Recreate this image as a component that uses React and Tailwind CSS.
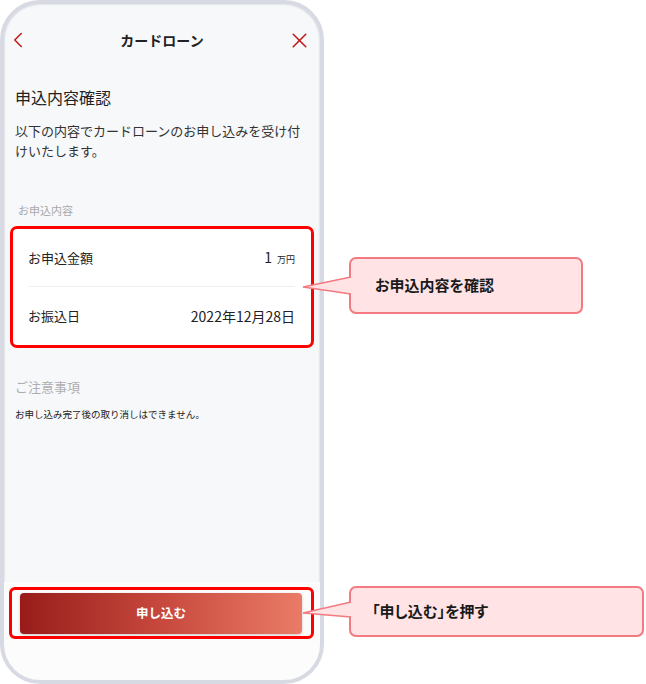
import { ChevronLeft, X } from "lucide-react";

const jp = "font-['Noto_Sans_CJK_JP','Noto_Sans',sans-serif]";

function Row({ label, children, divider }) {
  return (
    <div className={`flex h-[58px] items-center justify-between ${divider ? "border-b border-[#f0f0f2]" : ""}`}>
      <span className="text-[13px] text-[#222]">{label}</span>
      {children}
    </div>
  );
}

function Callout({ className, tail, children }) {
  return (
    <>
      <div
        className={`absolute flex items-center rounded-[7px] border-2 border-[#f37a80] bg-[#ffe3e5] text-[15px] font-bold text-[#1a1a1a] [font-feature-settings:'palt'] ${className}`}
      >
        {children}
      </div>
      <svg className="absolute" style={tail.style} width="52" height="24" viewBox="0 0 52 24">
        <path d={tail.fill} fill="#ffe3e5" />
        <path d={tail.line} fill="none" stroke="#f37a80" strokeWidth="1.5" />
      </svg>
    </>
  );
}

export default function App() {
  return (
    <div className={`relative h-[684px] w-[646px] overflow-hidden bg-white ${jp}`}>
      <div className="flex h-[684px] w-[324px] flex-col overflow-hidden rounded-[40px] border-[4px] border-[#d8dae3] bg-[#f7f8fa] shadow-[inset_0_0_2px_#b8bac8]">
        {/* header */}
        <div className="grid h-[72px] shrink-0 grid-cols-[1fr_auto_1fr] items-center px-[1px]">
          <ChevronLeft className="h-[26px] w-[26px] text-[#c21b1b]" strokeWidth={1.4} />
          <span className="text-[14px] font-bold text-[#222]">カードローン</span>
          <X className="mr-[7px] h-[25px] w-[25px] justify-self-end text-[#c21b1b]" strokeWidth={1.5} />
        </div>

        <div className="px-[11px]">
          <h1 className="mt-[9px] text-[16px] leading-[24px] text-[#222]">申込内容確認</h1>
          <p className="mt-[12px] text-[13px] leading-[20px] text-[#333]">
            以下の内容でカードローンのお申し込みを受け付けいたします。
          </p>
          <div className="mt-[41px] pl-[3px] text-[11px] leading-[16px] text-[#a9a9ad]">お申込内容</div>
        </div>

        <div className="mx-[6px] mt-[8px] rounded-[7px] border-[3px] border-[#ff0000] bg-white pl-[15px] pr-[16px]">
          <Row label="お申込金額" divider>
            <span className="text-[14px] text-[#222]">
              1<span className="ml-[5px] text-[9px]">万円</span>
            </span>
          </Row>
          <Row label="お振込日">
            <span className="text-[14px] text-[#222]">2022年12月28日</span>
          </Row>
        </div>

        <div className="px-[11px]">
          <div className="mt-[29px] text-[13px] leading-[20px] text-[#aeaeb2]">ご注意事項</div>
          <div className="mt-[9px] text-[9.5px] leading-[16px] text-[#222]">お申し込み完了後の取り消しはできません。</div>
        </div>

        <div className="flex-1" />

        <div className="bg-[#fcfcfd] pb-[41px] pt-[5px]">
          <div className="ml-[5px] mr-[6px] rounded-[6px] border-[3px] border-[#ff0000] pb-[2px] pl-[8px] pr-[9px] pt-[3px]">
            <button className="flex h-[41px] w-full items-center justify-center rounded-[4px] bg-gradient-to-r from-[#981b1a] via-[#c7483d] to-[#ea7b67] text-[12.5px] font-bold text-white shadow-[0_1px_3px_rgba(0,0,0,0.2)]">
              申し込む
            </button>
          </div>
        </div>
      </div>

      <Callout
        className="left-[349px] top-[257px] h-[57px] w-[234px] pl-[24px]"
        tail={{ style: { left: 301, top: 275 }, fill: "M2 12 L50 2 L50 19 Z", line: "M50 2 L2 12 L50 19" }}
      >
        お申込内容を確認
      </Callout>
      <Callout
        className="left-[349px] top-[586px] h-[51px] w-[295px] pl-[21px]"
        tail={{ style: { left: 301, top: 600 }, fill: "M2 13 L50 2 L50 17 Z", line: "M50 2 L2 13 L50 17" }}
      >
        「申し込む」を押す
      </Callout>
    </div>
  );
}
